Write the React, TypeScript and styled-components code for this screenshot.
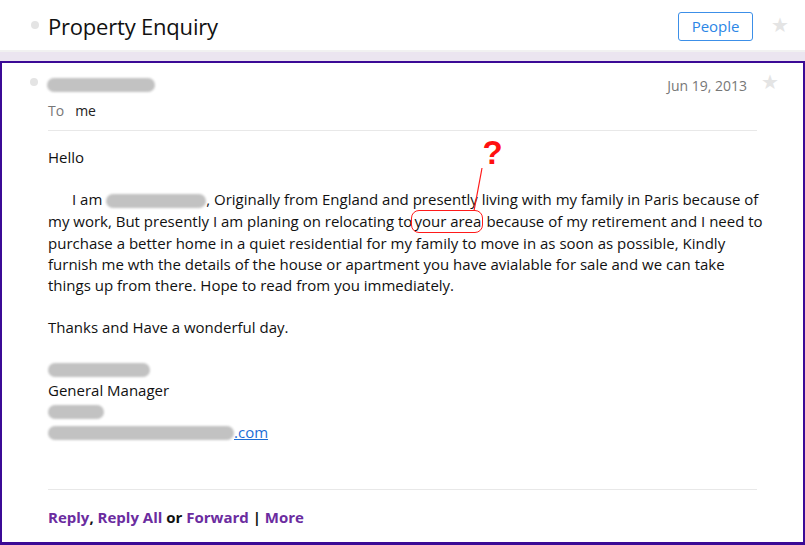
import React from "react";
import styled, { createGlobalStyle } from "styled-components";

const GlobalStyle = createGlobalStyle`
  html, body { margin: 0; padding: 0; background: #ffffff; }
  body { font-family: "Open Sans", "Noto Sans", sans-serif; color: #111; }
`;

const Page = styled.div`
  width: 805px;
  height: 545px;
  display: flex;
  flex-direction: column;
  overflow: hidden;
`;

const Header = styled.header`
  height: 50px;
  display: flex;
  align-items: center;
  padding-left: 31px;
  box-sizing: border-box;
`;

const Dot = styled.span`
  width: 8px;
  height: 8px;
  border-radius: 50%;
  background: #e4e4e4;
  flex: none;
  margin-right: 9px;
`;

const Title = styled.h1`
  margin: 2px 0 0;
  font-size: 22px;
  font-weight: 400;
  color: #111;
  letter-spacing: -0.2px;
`;

const PeopleButton = styled.button`
  margin-left: auto;
  margin-top: 2px;
  width: 75px;
  height: 29px;
  border: 1px solid #3c8fe8;
  border-radius: 3px;
  background: #fff;
  color: #2b86e6;
  font-family: "Open Sans", sans-serif;
  font-size: 15px;
  padding: 0;
  display: flex;
  align-items: center;
  justify-content: center;
`;

const Star = styled.span<{ $right: number; $left: number }>`
  color: #e4e4e4;
  font-size: 20px;
  line-height: 1;
  font-family: "DejaVu Sans", sans-serif;
  margin-left: ${(p) => p.$left}px;
  margin-right: ${(p) => p.$right}px;
`;

const Band = styled.div`
  height: 11px;
  background: linear-gradient(#f1f1f1 0 2px, #ebe5f0 2px);
  flex: none;
`;

const Message = styled.article`
  flex: 1;
  border: 2px solid #3b0a96;
  border-bottom-width: 3px;
  display: flex;
  flex-direction: column;
  padding: 0 46px;
`;

const MetaRow = styled.div`
  display: flex;
  align-items: center;
  height: 22px;
  margin-top: 8px;
  margin-left: -18px;
`;

const Blur = styled.span<{ $w: number }>`
  display: inline-block;
  width: ${(p) => p.$w}px;
  height: 14px;
  background: #c2c2c2;
  border-radius: 7px;
  filter: blur(1.2px);
  vertical-align: middle;
`;

const NameBlur = styled(Blur)`
  margin-top: 6px;
`;

const DateText = styled.span`
  margin-left: auto;
  margin-top: 6px;
  color: #777;
  font-size: 14px;
`;

const ToRow = styled.div`
  margin-top: 7px;
  height: 20px;
  display: flex;
  align-items: center;
  gap: 11px;
  font-size: 14px;
`;

const ToLabel = styled.span`
  color: #777;
`;

const ToName = styled.span`
  color: #222;
`;

const Divider = styled.hr<{ $top: number }>`
  border: 0;
  height: 1px;
  background: #e8e8e8;
  margin: ${(p) => p.$top}px 0 0;
`;

const Body = styled.div`
  margin-top: 16px;
  font-size: 15px;
  line-height: 21px;
  color: #111;
  white-space: nowrap;
`;

const Para = styled.p<{ $indent?: boolean }>`
  margin: 0 0 21px;
  text-indent: ${(p) => (p.$indent ? "24px" : "0")};
`;

const SigLine = styled.div`
  height: 21px;
  display: flex;
  align-items: center;
`;

const MailLink = styled.a`
  color: #1b6dd6;
  text-decoration: underline;
`;

const Circled = styled.span`
  position: relative;
  display: inline-block;
  border: 1px solid #ff1a1a;
  border-radius: 8px;
  padding: 0 1px 0 2px;
  margin: 0 3px 0 -1px;
  line-height: 21px;
  text-indent: 0;
`;

const Pointer = styled.svg`
  position: absolute;
  left: 58px;
  top: -46px;
  width: 30px;
  height: 48px;
  overflow: visible;
`;

const Question = styled.span`
  position: absolute;
  left: 70px;
  top: -75px;
  font-family: "Liberation Sans", Arial, sans-serif;
  font-weight: 700;
  font-size: 33px;
  line-height: 1;
  color: #ff1010;
`;

const Footer = styled.footer`
  margin-top: 17px;
  font-size: 15px;
  font-weight: 700;
  color: #111;
`;

const Action = styled.a`
  color: #6b2c9f;
  text-decoration: none;
`;

export default function App() {
  return (
    <>
      <GlobalStyle />
      <Page>
        <Header>
          <Dot />
          <Title>Property Enquiry</Title>
          <PeopleButton>People</PeopleButton>
          <Star $left={18} $right={16}>★</Star>
        </Header>
        <Band />
        <Message>
          <MetaRow>
            <Dot />
            <NameBlur $w={108} />
            <DateText>Jun 19, 2013</DateText>
            <Star $left={14} $right={-22}>★</Star>
          </MetaRow>
          <ToRow>
            <ToLabel>To</ToLabel>
            <ToName>me</ToName>
          </ToRow>
          <Divider $top={10} />
          <Body>
            <Para>Hello</Para>
            <Para $indent>
              I am <Blur $w={100} />, Originally from England and presently living with my family in Paris because of
              <br />
              my work, But presently I am planing on relocating to
              <Circled>
                your area
                <Pointer viewBox="0 0 30 48">
                  <line x1="4" y1="46" x2="12" y2="3" stroke="#ff1a1a" strokeWidth="1.2" />
                </Pointer>
                <Question>?</Question>
              </Circled>
              because of my retirement and I need to
              <br />
              purchase a better home in a quiet residential for my family to move in as soon as possible, Kindly
              <br />
              furnish me wth the details of the house or apartment you have avialable for sale and we can take
              <br />
              things up from there. Hope to read from you immediately.
            </Para>
            <Para>Thanks and Have a wonderful day.</Para>
            <SigLine>
              <Blur $w={102} />
            </SigLine>
            <SigLine>General Manager</SigLine>
            <SigLine>
              <Blur $w={56} />
            </SigLine>
            <SigLine>
              <Blur $w={186} />
              <MailLink href="#">.com</MailLink>
            </SigLine>
          </Body>
          <Divider $top={46} />
          <Footer>
            <Action href="#">Reply</Action>, <Action href="#">Reply All</Action> or{" "}
            <Action href="#">Forward</Action> | <Action href="#">More</Action>
          </Footer>
        </Message>
      </Page>
    </>
  );
}
